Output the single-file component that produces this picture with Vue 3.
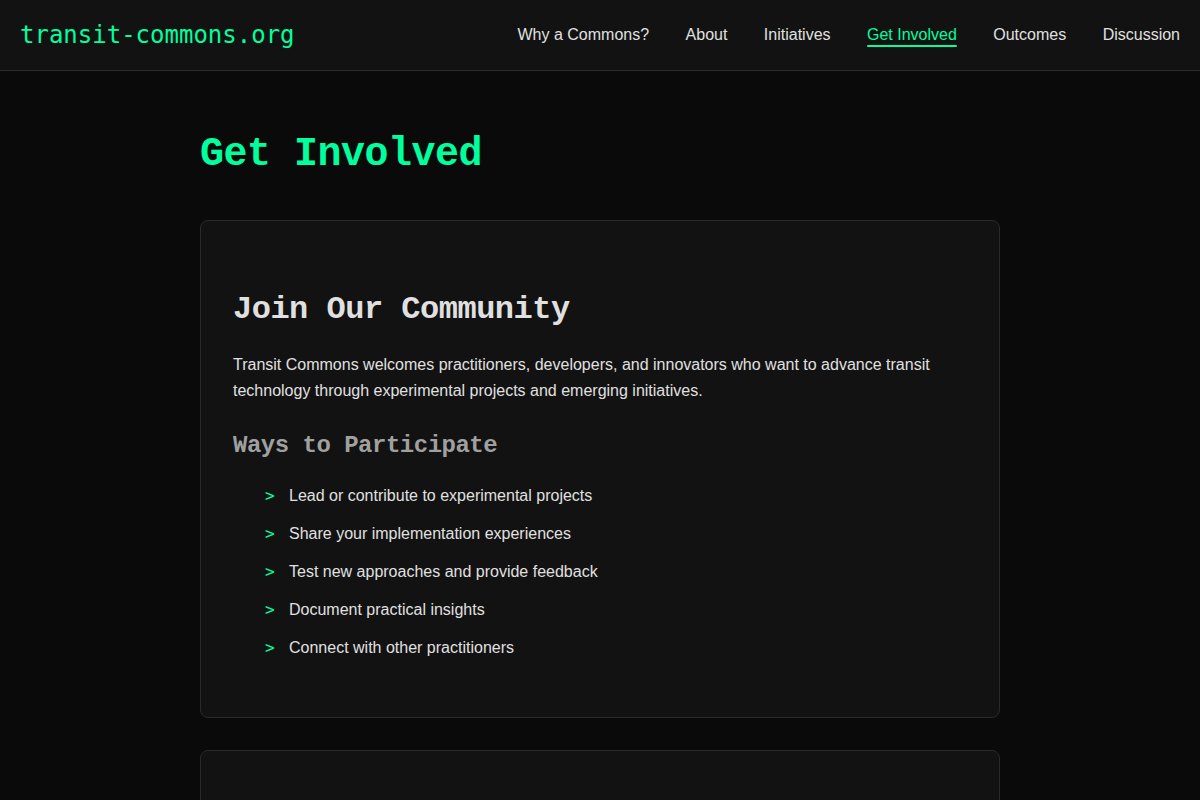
<script setup>
const links = [
  { label: 'Why a Commons?' },
  { label: 'About' },
  { label: 'Initiatives' },
  { label: 'Get Involved', active: true },
  { label: 'Outcomes' },
  { label: 'Discussion' },
]

const ways = [
  'Lead or contribute to experimental projects',
  'Share your implementation experiences',
  'Test new approaches and provide feedback',
  'Document practical insights',
  'Connect with other practitioners',
]
</script>

<template>
  <div class="page">
    <header class="site-header">
      <nav class="nav" aria-label="Main">
        <a class="logo" href="#">transit-commons.org</a>
        <ul class="links">
          <template v-for="link in links" :key="link.label">
            <li>
              <a
                href="#"
                class="link"
                :class="{ active: link.active }"
                :aria-current="link.active ? 'page' : undefined"
              >{{ link.label }}</a>
            </li>{{ ' ' }}
          </template>
        </ul>
      </nav>
    </header>

    <main class="content">
      <h1>Get Involved</h1>

      <section class="card">
        <h2>Join Our Community</h2>
        <p>
          Transit Commons welcomes practitioners, developers, and innovators who want to advance
          transit technology through experimental projects and emerging initiatives.
        </p>
        <h3>Ways to Participate</h3>
        <ul class="ways">
          <li v-for="way in ways" :key="way">{{ way }}</li>
        </ul>
      </section>

      <section class="card next"></section>
    </main>
  </div>
</template>

<style>
html {
  background: #0a0a0a;
}
</style>

<style scoped>
.page {
  min-height: 100vh;
  background: #0a0a0a;
  color: #e0e0e0;
  font-family: "Liberation Sans", Arial, sans-serif;
  font-size: 16px;
  line-height: 26px;
}

.site-header {
  background: #121212;
  border-bottom: 1px solid #2a2a2a;
}

.nav {
  display: flex;
  align-items: center;
  justify-content: space-between;
  padding: 16px 20px;
}

.logo {
  color: #00ff9d;
  font-family: "DejaVu Sans Mono", monospace;
  font-size: 24px;
  line-height: 38px;
  text-decoration: none;
}

.links {
  margin: 0;
  padding: 0;
  list-style: none;
}

.links li {
  display: inline-block;
  margin-left: 32px;
}

.link {
  position: relative;
  display: block;
  color: #e0e0e0;
  text-decoration: none;
}

.link.active {
  color: #00ff9d;
}

.link.active::after {
  content: "";
  position: absolute;
  left: 0;
  right: 0;
  bottom: 1px;
  height: 2px;
  border-radius: 1px;
  background: #00ff9d;
}

.content {
  max-width: 800px;
  margin: 0 auto;
  padding: 52px 20px;
}

h1,
h2,
h3 {
  margin: 0;
  font-family: "Liberation Mono", monospace;
  font-weight: 700;
  letter-spacing: -0.5px;
}

h1 {
  margin-bottom: 33px;
  color: #00ff9d;
  font-size: 40px;
  line-height: 64px;
}

h2 {
  margin-bottom: 16px;
  font-size: 32px;
  line-height: 52px;
}

h3 {
  margin-bottom: 16px;
  color: #a0a0a0;
  font-size: 24px;
  line-height: 42px;
}

p {
  margin: 0 0 21px;
}

.card {
  margin-bottom: 32px;
  padding: 63px 32px 44px;
  background: #121212;
  border: 1px solid #2a2a2a;
  border-radius: 8px;
}

.next {
  min-height: 200px;
}

.ways {
  margin: 0;
  padding: 0 0 0 32px;
  list-style: none;
}

.ways li {
  position: relative;
  margin-bottom: 12px;
  padding-left: 24px;
}

.ways li::before {
  content: ">";
  position: absolute;
  left: 0;
  color: #00ff9d;
  font-family: "DejaVu Sans Mono", monospace;
}
</style>
